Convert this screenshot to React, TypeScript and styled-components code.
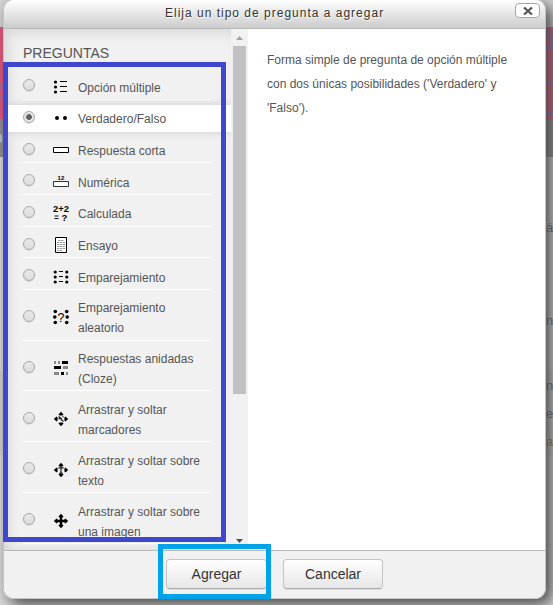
import React, { useState } from "react";
import styled, { createGlobalStyle } from "styled-components";

const GlobalStyle = createGlobalStyle`
  * { box-sizing: border-box; }
  html, body { margin: 0; height: 605px; overflow: hidden; }
  body { font-family: "Liberation Sans", Arial, sans-serif; }
`;

const Page = styled.main`
  position: relative;
  width: 553px;
  height: 605px;
  overflow: hidden;
  background: #c8c8c8;
`;

const Band = styled.div<{ $height: number; $color: string }>`
  display: flex;
  justify-content: space-between;
  height: ${(p) => p.$height}px;
  background: ${(p) => p.$color};
  overflow: hidden;
`;

const PageText = styled.span<{ $color?: string }>`
  align-self: center;
  margin-left: auto;
  width: 7px;
  font-size: 13px;
  white-space: nowrap;
  color: ${(p) => p.$color || "#5e6268"};
`;

const PageStart = styled.span`
  align-self: center;
  margin-left: -5px;
  font-size: 13px;
  color: #d8e2e8;
`;

const Dialog = styled.section`
  position: absolute;
  left: 3px;
  top: -1px;
  width: 543px;
  height: 600px;
  display: flex;
  flex-direction: column;
  overflow: hidden;
  border: 1px solid #c4c4c4;
  border-radius: 11px;
  background: #f1f1f1;
`;

const DialogShadow = styled.div`
  position: absolute;
  left: 3px;
  top: -1px;
  width: 543px;
  height: 600px;
  border-radius: 11px;
  box-shadow: 6px 6px 15px 0 #4a4a4a;
`;

const Header = styled.header`
  display: flex;
  flex: 0 0 29px;
  align-items: flex-start;
  justify-content: space-between;
  padding: 2px 5px 0 161px;
  border-bottom: 1px solid #b9b9b9;
  background: linear-gradient(#fff, #ccc);
`;

const Title = styled.h1`
  margin: 0;
  padding-top: 2px;
  font-size: 12px;
  font-weight: 400;
  line-height: 18px;
  letter-spacing: 1px;
  white-space: nowrap;
  color: #333;
  text-shadow: 1px 1px 1px #fff;
`;

const Close = styled.button`
  display: grid;
  place-items: center;
  width: 25px;
  height: 15px;
  margin-top: 1px;
  padding: 0;
  border: 1px solid #a5a5a5;
  border-radius: 4px;
  background: #fff;
`;

const Body = styled.div`
  display: flex;
  flex: 0 0 521px;
  background: #fff;
`;

const Options = styled.div`
  width: 227px;
  overflow: hidden;
  background: #f1f1f1;
  box-shadow: inset 8px 8px 14px -5px #d4d4d4, inset 0 -7px 8px -5px #ddd;
`;

const Heading = styled.h2`
  height: 41px;
  margin: 0;
  padding: 14px 0 0 19px;
  font-size: 14px;
  font-weight: 400;
  line-height: 20px;
  letter-spacing: 0;
  color: #555;
`;

const Row = styled.label<{ $height: number; $selected: boolean }>`
  display: grid;
  grid-template-columns: 12px 16px 1fr;
  column-gap: 18px;
  align-items: start;
  height: ${(p) => p.$height}px;
  margin-top: ${(p) => (p.$selected ? 5 : 0)}px;
  padding-left: 19px;
  background: ${(p) =>
    p.$selected
      ? "#fff"
      : "linear-gradient(#fff, #fff) 19px 100% / 188px 1px no-repeat"};
  box-shadow: ${(p) => (p.$selected ? "0 0 8px #ccc" : "none")};
`;

const Radio = styled.input<{ $top: number }>`
  appearance: none;
  width: 12px;
  height: 12px;
  margin: ${(p) => p.$top}px 0 0;
  border: 1px solid #a8a8a8;
  border-radius: 50%;
  background: linear-gradient(#e9e9e9, #dcdcdc);
  box-shadow: 0 1px 1px #ddd;
  &:checked {
    background: radial-gradient(circle, #606060 0 2.5px, #e5e5e5 3.2px);
  }
`;

const Icon = styled.svg<{ $top: number }>`
  display: block;
  width: 16px;
  height: 16px;
  margin-top: ${(p) => p.$top}px;
  overflow: visible;
`;

const Label = styled.span<{ $top: number }>`
  margin: ${(p) => p.$top}px 0 0 -9px;
  font-size: 12px;
  line-height: 20px;
  white-space: pre;
  color: #555;
`;

const Scrollbar = styled.div`
  display: flex;
  flex-direction: column;
  align-items: center;
  justify-content: space-between;
  width: 17px;
  background: #f1f1f1;
`;

const Arrow = styled.svg`
  display: block;
  width: 17px;
  height: 17px;
`;

const Track = styled.div`
  flex: 1;
`;

const Thumb = styled.div`
  width: 13px;
  height: 348px;
  background: #c1c1c1;
`;

const Description = styled.p`
  flex: 1;
  margin: 0;
  padding: 19px 0 0 19px;
  font-size: 12px;
  line-height: 24px;
  white-space: pre;
  color: #555;
`;

const Footer = styled.footer`
  display: flex;
  flex: 1;
  gap: 16px;
  padding: 8px 0 0 162px;
  border-top: 1px solid #b9b9b9;
  background: #f1f1f1;
`;

const Action = styled.button<{ $width: number }>`
  width: ${(p) => p.$width}px;
  height: 30px;
  padding: 0;
  border: 1px solid #c5c5c5;
  border-bottom-color: #aaa;
  border-radius: 4px;
  background: linear-gradient(#fff, #e6e6e6);
  box-shadow: 0 1px 1px #ddd;
  color: #333;
  font: 14px "Liberation Sans", Arial, sans-serif;
`;

const Highlight = styled.div<{ $x: number; $y: number; $w: number; $h: number; $color: string }>`
  position: absolute;
  left: ${(p) => p.$x}px;
  top: ${(p) => p.$y}px;
  width: ${(p) => p.$w}px;
  height: ${(p) => p.$h}px;
  border: 5px solid ${(p) => p.$color};
  pointer-events: none;
`;

const Dots = ({ points, r = 1.5 }: { points: number[][]; r?: number }) => (
  <>{points.map(([x, y]) => <circle key={`${x}-${y}`} cx={x} cy={y} r={r} />)}</>
);

const arrowHeads = (
  <path d="M8 .8L10.5 3.6L9.5 4.6H6.5L5.5 3.6ZM8 15.2L10.5 12.4L9.5 11.4H6.5L5.5 12.4ZM.8 8L3.6 5.5L4.6 6.5V9.5L3.6 10.5ZM15.2 8L12.4 5.5L11.4 6.5V9.5L12.4 10.5Z" />
);

const icons: Record<string, React.ReactNode> = {
  multiple: (
    <>
      <Dots r={1.6} points={[[2.5, 3], [2.5, 8], [2.5, 13]]} />
      <path d="M7 2.5h7M7 7.5h7M7 12.5h7" stroke="#000" />
    </>
  ),
  truefalse: <Dots points={[[4, 8], [12, 8]]} r={2} />,
  short: <path d="M.5 5.5h15v5H.5z" fill="#fff" stroke="#000" />,
  numeric: (
    <>
      <path d="M.5 7.5h15v5H.5z" fill="#fff" stroke="#333" />
      <text x="4.6" y="5.7" fontSize="6" fontWeight="700" textLength="6.7">12</text>
    </>
  ),
  calculated: (
    <g fontWeight="700" fontSize="9.5">
      <text x="0" y="7" textLength="16" lengthAdjust="spacingAndGlyphs">2+2</text>
      <path d="M1.5 11h4M1.5 13.5h4" stroke="#111" strokeWidth="1.2" />
      <text x="8.5" y="15.5">?</text>
    </g>
  ),
  essay: (
    <>
      <path d="M2.5.5h11v15h-11z" fill="#fff" stroke="#000" />
      <path d="M5 3.5h6M4 5.5h8M4 7.5h8M4 9.5h8M4 11.5h8M4 13.5h6" stroke="#7a8080" strokeWidth=".8" strokeDasharray="2.4 .6" />
    </>
  ),
  match: (
    <>
      <Dots r={1.6} points={[[2.2, 3], [2.2, 8], [2.2, 13], [13.8, 3], [13.8, 8], [13.8, 13]]} />
      <path d="M6 2.5h4M6 7.5h4M6 12.5h4" stroke="#000" />
    </>
  ),
  random: (
    <>
      <Dots r={1.8} points={[[2.3, 2.5], [1.8, 8], [2.3, 13.5], [13.7, 2.5], [14.2, 8], [13.7, 13.5]]} />
      <text x="4.6" y="12.8" fontSize="12.5">?</text>
    </>
  ),
  cloze: (
    <>
      <path d="M1 1h2v3H1zM5 1h2v3H5zM10 6h5v3h-5zM1 12h5v3H1zM13 12h2v3h-2z" fill="#888" />
      <path d="M9 1h6v3H9zM1 6h7v3H1zM8 12h3v3H8z" />
    </>
  ),
  marker: (
    <>
      {arrowHeads}
      <path d="M5.6 5.4L7.8 7.2M5.5 7.6h3.5M8 8.6l2.6 2M9.6 6.2l.8-.8" stroke="#222" strokeWidth="1.3" />
    </>
  ),
  text: <>{arrowHeads}<path d="M8 4v8M5.3 5.8h5.4M6.5 11.2h3" stroke="#222" strokeWidth="1.2" /></>,
  image: <>{arrowHeads}<path d="M8 3v10M3 8h10" stroke="#000" strokeWidth="2.4" /></>,
};

// Vertical metrics: row height, then offsets of the radio, icon and label.
const questionTypes = [
  { label: "Opción múltiple", icon: "multiple", m: [30, 9, 9, 8] },
  { label: "Verdadero/Falso", icon: "truefalse", m: [27, 6, 5, 4] },
  { label: "Respuesta corta", icon: "short", m: [31, 11, 10, 9] },
  { label: "Numérica", icon: "numeric", m: [32, 11, 11, 10] },
  { label: "Calculada", icon: "calculated", m: [32, 11, 10, 9] },
  { label: "Ensayo", icon: "essay", m: [31, 11, 10, 9] },
  { label: "Emparejamiento", icon: "match", m: [32, 11, 11, 10] },
  { label: "Emparejamiento\naleatorio", icon: "random", m: [51, 20, 19, 8] },
  { label: "Respuestas anidadas\n(Cloze)", icon: "cloze", m: [50, 20, 19, 8] },
  { label: "Arrastrar y soltar\nmarcadores", icon: "marker", m: [51, 21, 20, 9] },
  { label: "Arrastrar y soltar sobre\ntexto", icon: "text", m: [51, 20, 20, 9] },
  { label: "Arrastrar y soltar sobre\nuna imagen", icon: "image", m: [51, 20, 20, 9] },
];

export default function App() {
  const [selected, setSelected] = useState("truefalse");

  return (
    <Page>
      <GlobalStyle />
      <Band $height={27} $color="#d2d2d2" />
      <Band $height={92} $color="#e0527a">
        <svg width="553" height="92" fill="none" stroke="#a06aa6" strokeWidth="4">
          <path d="M543 0q7 4 10 18M543 23q6-4 12-2M543 50q3 5 10 7M543 83q6 6 12 2" />
          <path d="M-2 63L5 56M0 70l5 3" strokeWidth="2" />
        </svg>
      </Band>
      <Band $height={38} $color="#8d8d8d"><PageStart>0</PageStart></Band>
      <Band $height={140} $color="#d8d8d8"><PageText>áx</PageText></Band>
      <Band $height={46} $color="#d8d8d8"><PageText>na</PageText></Band>
      <Band $height={28} $color="#d8d8d8" />
      <Band $height={28} $color="#cecece"><PageText>n,</PageText></Band>
      <Band $height={28} $color="#cecece"><PageText>el</PageText></Band>
      <Band $height={28} $color="#cecece"><PageText $color="#a77752">a p</PageText></Band>
      <Band $height={150} $color="#d8d8d8" />
      <DialogShadow />
      <Dialog role="dialog" aria-labelledby="dialog-title">
        <Header>
          <Title id="dialog-title">Elija un tipo de pregunta a agregar</Title>
          <Close aria-label="Cerrar">
            <svg width="10" height="8" viewBox="0 0 10 8" stroke="#555" strokeWidth="2.2">
              <path d="M1 0.5L9 7.5M9 0.5L1 7.5" />
            </svg>
          </Close>
        </Header>
        <Body>
          <Options>
            <Heading>PREGUNTAS</Heading>
            {questionTypes.map(({ label, icon, m }) => (
              <Row key={icon} $height={m[0]} $selected={selected === icon}>
                <Radio
                  type="radio"
                  name="question-type"
                  $top={m[1]}
                  checked={selected === icon}
                  onChange={() => setSelected(icon)}
                />
                <Icon $top={m[2]} viewBox="0 0 16 16" aria-hidden="true">{icons[icon]}</Icon>
                <Label $top={m[3]}>{label}</Label>
              </Row>
            ))}
          </Options>
          <Scrollbar>
            <Arrow viewBox="0 0 17 17"><path d="M5 11h7L8.5 7z" fill="#a3a3a3" /></Arrow>
            <Track><Thumb /></Track>
            <Arrow viewBox="0 0 17 17"><path d="M5 6h7L8.5 10z" fill="#505050" /></Arrow>
          </Scrollbar>
          <Description>{"Forma simple de pregunta de opción múltiple\ncon dos únicas posibilidades ('Verdadero' y\n'Falso')."}</Description>
        </Body>
        <Footer>
          <Action $width={101}>Agregar</Action>
          <Action $width={100}>Cancelar</Action>
        </Footer>
      </Dialog>
      <Highlight $x={3} $y={62} $w={223} $h={480} $color="#3f48cc" />
      <Highlight $x={158} $y={544} $w={113} $h={55} $color="#00a2e8" />
    </Page>
  );
}
